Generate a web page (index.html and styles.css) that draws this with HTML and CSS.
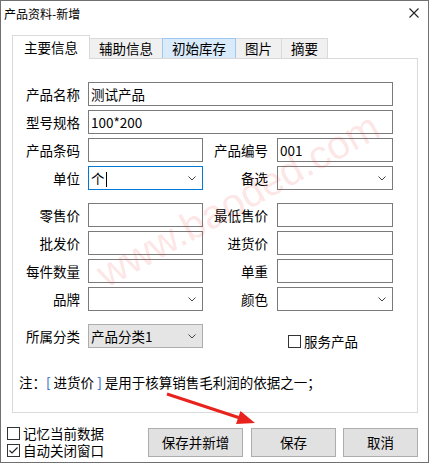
FILE: index.html
```html
<!DOCTYPE html>
<html lang="zh-CN">
<head>
    <meta charset="UTF-8">
    <title>产品资料-新增</title>
    <link rel="stylesheet" href="styles.css">
</head>
<body>

<div class="window">
    <div class="titlebar">
        <span class="title">产品资料-新增</span>
        <svg class="close" width="10" height="10" viewBox="0 0 10 10">
            <path d="M0.5 0.5 L9.5 9.5 M9.5 0.5 L0.5 9.5" stroke="#222" stroke-width="1.1" fill="none"/>
        </svg>
    </div>

    <div class="content">
        <div class="tabs">
            <div class="tab active">主要信息</div>
            <div class="tab">辅助信息</div>
            <div class="tab hover">初始库存</div>
            <div class="tab">图片</div>
            <div class="tab">摘要</div>
        </div>

        <div class="panel">
            <div class="grid">
                <div class="lbl">产品名称</div>
                <div class="field wide">测试产品</div>
                <div class="lbl">型号规格</div>
                <div class="field wide">100*200</div>
                <div class="lbl">产品条码</div>
                <div class="field"></div>
                <div class="lbl right">产品编号</div>
                <div class="field">001</div>
                <div class="lbl">单位</div>
                <div class="field select focus"><span>个<i class="caret"></i></span><svg class="chev" width="8" height="5" viewBox="0 0 8 5"><path d="M0.5 0.5 L4 4 L7.5 0.5" stroke="#444" fill="none"/></svg></div>
                <div class="lbl right">备选</div>
                <div class="field select"><span></span><svg class="chev" width="8" height="5" viewBox="0 0 8 5"><path d="M0.5 0.5 L4 4 L7.5 0.5" stroke="#444" fill="none"/></svg></div>
            </div>

            <div class="grid second">
                <div class="lbl">零售价</div>
                <div class="field"></div>
                <div class="lbl right">最低售价</div>
                <div class="field"></div>
                <div class="lbl">批发价</div>
                <div class="field"></div>
                <div class="lbl right">进货价</div>
                <div class="field"></div>
                <div class="lbl">每件数量</div>
                <div class="field"></div>
                <div class="lbl right">单重</div>
                <div class="field"></div>
                <div class="lbl">品牌</div>
                <div class="field select"><span></span><svg class="chev" width="8" height="5" viewBox="0 0 8 5"><path d="M0.5 0.5 L4 4 L7.5 0.5" stroke="#444" fill="none"/></svg></div>
                <div class="lbl right">颜色</div>
                <div class="field select"><span></span><svg class="chev" width="8" height="5" viewBox="0 0 8 5"><path d="M0.5 0.5 L4 4 L7.5 0.5" stroke="#444" fill="none"/></svg></div>
            </div>

            <div class="grid third">
                <div class="lbl">所属分类</div>
                <div class="field select combo"><span>产品分类1</span><svg class="chev" width="8" height="5" viewBox="0 0 8 5"><path d="M0.5 0.5 L4 4 L7.5 0.5" stroke="#444" fill="none"/></svg></div>
                <div class="check service">
                    <svg width="13" height="13" viewBox="0 0 13 13"><rect x="0.5" y="0.5" width="12" height="12" fill="#fff" stroke="#333"/></svg>
                    <span>服务产品</span>
                </div>
            </div>

            <p class="note">注：<span class="br">[</span> 进货价 <span class="br">]</span> 是用于核算销售毛利润的依据之一；</p>
        </div>
    </div>

    <div class="footer">
        <div class="checks">
            <div class="check">
                <svg width="13" height="13" viewBox="0 0 13 13"><rect x="0.5" y="0.5" width="12" height="12" fill="#fff" stroke="#333"/></svg>
                <span>记忆当前数据</span>
            </div>
            <div class="check">
                <svg width="13" height="13" viewBox="0 0 13 13"><rect x="0.5" y="0.5" width="12" height="12" fill="#fff" stroke="#333"/><path d="M2.5 6.5 L5 9 L10.5 3.5" stroke="#222" stroke-width="1.2" fill="none"/></svg>
                <span>自动关闭窗口</span>
            </div>
        </div>
        <div class="buttons">
            <div class="btn wide-btn">保存并新增</div>
            <div class="btn save-btn">保存</div>
            <div class="btn cancel-btn">取消</div>
        </div>
    </div>

    <div class="watermark">www.baoded.com</div>

    <svg class="arrow" width="429" height="463" viewBox="0 0 429 463">
        <line x1="167" y1="394" x2="240" y2="418" stroke="#e8231e" stroke-width="3"/>
        <polygon points="255,423 236,424 240.5,411" fill="#e8231e"/>
    </svg>
</div>

</body>
</html>
```

FILE: styles.css
```css
* {
    box-sizing: border-box;
}
body {
    margin: 0;
    background-color: #fff;
    font-family: "Noto Sans CJK SC", "Microsoft YaHei", sans-serif;
    font-size: 13.5px;
    color: #000;
}
.window {
    position: relative;
    width: 429px;
    height: 463px;
    border: 1px solid #707070;
    background-color: #fff;
    overflow: hidden;
}
.titlebar {
    height: 24px;
    display: flex;
    align-items: center;
    justify-content: space-between;
    padding: 0 9px 0 3px;
    font-size: 12px;
}
.content {
    padding: 10px 10px 0 11px;
}
.tabs {
    display: flex;
    align-items: flex-end;
    height: 23px;
}
.tab {
    height: 20px;
    line-height: 19px;
    padding: 0 9px;
    margin-left: -1px;
    background-color: #f0f0f0;
    border: 1px solid #d9d9d9;
    border-bottom: none;
}
.tab.active {
    height: 24px;
    line-height: 22px;
    padding: 0 11px;
    margin-left: 0;
    margin-bottom: -1px;
    position: relative;
    z-index: 2;
    background-color: #fff;
}
.tab.hover {
    background-color: #d9eafa;
    border-color: #9ec8f0;
    position: relative;
    z-index: 1;
}
.panel {
    height: 355px;
    border: 1px solid #d9d9d9;
    padding-top: 23px;
}
.grid {
    display: grid;
    grid-template-columns: 75px 115px 74px 116px;
    grid-auto-rows: 24px;
    row-gap: 4px;
}
.grid.second, .grid.third {
    margin-top: 13px;
}
.lbl {
    text-align: right;
    padding-right: 8px;
    line-height: 24px;
    white-space: nowrap;
}
.lbl.right {
    padding-right: 9px;
}
.field {
    border: 1px solid #7a7a7a;
    background-color: #fff;
    padding-left: 2px;
    line-height: 22px;
    white-space: nowrap;
}
.field.wide {
    grid-column: 2 / 5;
}
.select {
    display: flex;
    align-items: center;
    justify-content: space-between;
    padding-right: 6px;
}
.select.focus {
    border-color: #0078d7;
}
.select.combo {
    background-color: #e5e5e5;
    border-color: #adadad;
}
.caret {
    display: inline-block;
    width: 1px;
    height: 15px;
    margin-left: 1px;
    background-color: #000;
    vertical-align: -3px;
}
.check {
    display: flex;
    align-items: center;
    gap: 3px;
    height: 17px;
    line-height: 17px;
    white-space: nowrap;
}
.check.service {
    grid-column: 3 / 5;
    margin: 9px 0 0 85px;
}
.note {
    margin: 25px 0 0 6px;
    line-height: 18px;
}
.note .br {
    color: #1b5fc4;
}
.footer {
    display: flex;
    justify-content: space-between;
    align-items: flex-start;
    padding: 12px 10px 0 6px;
}
.buttons {
    display: flex;
    gap: 7px;
    margin-top: 3px;
}
.btn {
    height: 29px;
    line-height: 27px;
    text-align: center;
    background-color: #e1e1e1;
    border: 1px solid #adadad;
}
.wide-btn {
    width: 95px;
    margin-right: 1px;
}
.save-btn {
    width: 85px;
}
.cancel-btn {
    width: 75px;
}
.watermark {
    position: absolute;
    left: 88px;
    top: 256px;
    font-family: "Liberation Sans", Arial, sans-serif;
    font-size: 40px;
    line-height: 44px;
    color: rgba(240, 60, 60, 0.14);
    transform: rotate(-29deg);
    transform-origin: left top;
    white-space: nowrap;
    pointer-events: none;
}
.arrow {
    position: absolute;
    left: -1px;
    top: -1px;
    pointer-events: none;
}
```
